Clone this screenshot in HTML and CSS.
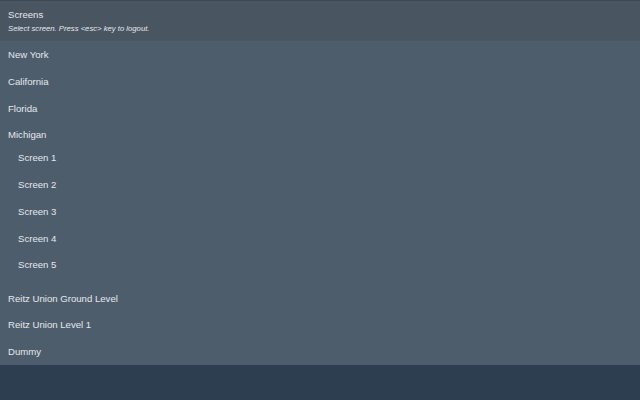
FILE: index.html
```html
<!DOCTYPE html>
<html>
<head>
<meta charset="utf-8">
<link rel="stylesheet" href="styles.css">
</head>
<body>
<div class="panel">
  <div class="header">
    <div class="title">Screens</div>
    <div class="subtitle">Select screen. Press &lt;esc&gt; key to logout.</div>
  </div>
  <ul class="list">
    <li class="item">New York</li>
    <li class="item">California</li>
    <li class="item">Florida</li>
    <li class="group">
      <div class="group-label">Michigan</div>
      <ul class="children">
        <li class="item child">Screen 1</li>
        <li class="item child">Screen 2</li>
        <li class="item child">Screen 3</li>
        <li class="item child">Screen 4</li>
        <li class="item child">Screen 5</li>
      </ul>
    </li>
    <li class="item">Reitz Union Ground Level</li>
    <li class="item">Reitz Union Level 1</li>
    <li class="item">Dummy</li>
  </ul>
</div>
</body>
</html>
```
FILE: styles.css
```css
html, body {
  margin: 0;
  padding: 0;
  height: 100%;
}
body {
  background: #2c3e50;
  font-family: "Liberation Sans", Arial, sans-serif;
  color: #e4e8ec;
  font-size: 9.6px;
}
.panel {
  background: #4e5d6c;
}
.header {
  background: #4a5562;
  border-top: 1px solid #3e4955;
  height: 41px;
  box-sizing: border-box;
  padding: 8px 8px 0;
}
.title {
  line-height: 11px;
  font-size: 9.6px;
}
.subtitle {
  font-style: italic;
  font-size: 7.7px;
  line-height: 11px;
  margin-top: 3px;
}
.list {
  list-style: none;
  margin: 0;
  padding: 0;
}
.item {
  padding: 9px 8px 7px;
  line-height: 10.8px;
}
.group-label {
  padding: 9px 8px 3px;
  line-height: 10.8px;
}
.children {
  list-style: none;
  margin: 0;
  padding: 0 0 6.5px;
}
.child {
  padding-left: 18px;
}
```
